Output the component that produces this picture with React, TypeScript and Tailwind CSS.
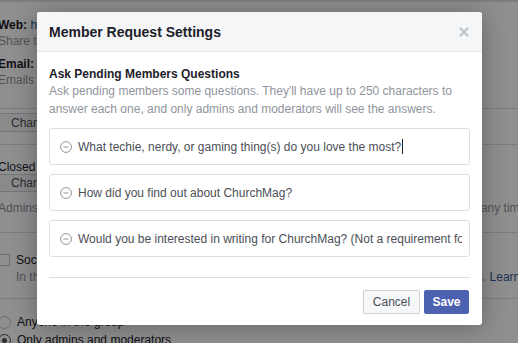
import { useState } from "react";

const questions = [
  "What techie, nerdy, or gaming thing(s) do you love the most?",
  "How did you find out about ChurchMag?",
  "Would you be interested in writing for ChurchMag? (Not a requirement for membership)",
];

export default function App() {
  const [values, setValues] = useState(questions);

  return (
    <div
      className="relative w-[518px] h-[343px] overflow-hidden bg-white text-[12px] leading-4 text-[#1d2129]"
      style={{ fontFamily: '"Liberation Sans", Arial, sans-serif' }}
    >
      <GroupSettingsPage />

      <div className="absolute inset-0 bg-black/[0.44]" />

      <div className="absolute left-[37px] top-[12px] w-[445px] h-[313px] flex flex-col rounded-[3px] bg-white shadow-[0_2px_26px_rgba(0,0,0,0.3)] overflow-hidden">
        <div className="h-[40px] shrink-0 flex items-center justify-between pl-3 pr-[13px] bg-[#f5f6f7] border-b border-[#e5e5e5]">
          <h1 className="text-[14px] font-bold text-[#1d2129]">Member Request Settings</h1>
          <svg width="10" height="10" viewBox="0 0 10 10" className="text-[#bec2c9]">
            <path d="M1 1L9 9M9 1L1 9" stroke="currentColor" strokeWidth="2" />
          </svg>
        </div>

        <div className="flex flex-col flex-1 px-3 pt-[14px] pb-[11px]">
          <h2 className="font-bold text-[#1d2129]">Ask Pending Members Questions</h2>
          <p className="leading-[18px] text-[#90949c]">
            Ask pending members some questions. They'll have up to 250 characters to answer each one,
            and only admins and moderators will see the answers.
          </p>

          <ul className="mt-[10px] flex flex-col gap-[9px]">
            {values.map((q, i) => (
              <li
                key={i}
                className="h-[37px] flex items-center gap-[6px] pl-[10px] pr-[7px] rounded-[3px] border border-[#dddfe2] bg-white"
              >
                <MinusCircle />
                {i === 0 ? (
                  <span className="flex-1 min-w-0 flex items-center text-[#4b4f56] whitespace-nowrap">
                    {q}
                    <span className="ml-px w-px h-[15px] bg-[#1d2129]" />
                  </span>
                ) : (
                  <input
                    value={q}
                    onChange={(e) =>
                      setValues((v) => v.map((x, j) => (j === i ? e.target.value : x)))
                    }
                    className="flex-1 min-w-0 bg-transparent outline-none text-[12px] text-[#4b4f56]"
                    style={{ fontFamily: '"Liberation Sans", Arial, sans-serif' }}
                  />
                )}
              </li>
            ))}
          </ul>

          <div className="mt-[20px] border-t border-[#dadde1]" />

          <div className="mt-auto flex justify-end gap-1 pr-px">
            <button className="h-6 w-[57px] rounded-[2px] border border-[#ced0d4] bg-[#f6f7f9] text-[12px] text-[#4b4f56]">
              Cancel
            </button>
            <button className="h-6 w-[45px] rounded-[2px] border border-[#4c62b1] bg-[#4c62b1] text-[12px] font-bold text-white">
              Save
            </button>
          </div>
        </div>
      </div>
    </div>
  );
}

function MinusCircle() {
  return (
    <svg width="12" height="12" viewBox="0 0 12 12" className="shrink-0 text-[#90949c]">
      <circle cx="6" cy="6" r="5.4" fill="none" stroke="currentColor" strokeWidth="1" />
      <path d="M3.5 6H8.5" stroke="currentColor" strokeWidth="1.2" />
    </svg>
  );
}

function GroupSettingsPage() {
  return (
    <div className="flex flex-col ml-[-2px] w-[640px] border-t-2 border-[#dddfe2] whitespace-nowrap">
      <div className="h-[106px] pt-[15px] flex flex-col">
        <p>
          <span className="font-bold">Web: </span>
          <span className="text-[#365899]">https://www.facebook.com/groups/churchmag</span>
        </p>
        <p className="text-[#90949c]">Share this link to invite people to the group.</p>
        <p className="mt-[7px]">
          <span className="font-bold">Email: </span>
          <span className="text-[#365899]">churchmag@groups.facebook.com</span>
        </p>
        <p className="text-[#90949c]">Emails sent to this address will be posted to the group.</p>
      </div>

      <div className="h-[36px] border-t border-[#dddfe2] pt-[4px]">
        <button className="h-[19px] px-3 border border-[#ced0d4] bg-[#f6f7f9] text-[#4b4f56]">
          Change Group Privacy Setting
        </button>
      </div>

      <div className="h-[88px] border-t border-[#dddfe2] pt-[15px] flex flex-col">
        <p className="leading-[14px]">Closed Group</p>
        <div>
          <button className="h-[18px] px-3 border border-[#ced0d4] bg-[#f6f7f9] text-[#4b4f56]">
            Change Group Privacy
          </button>
        </div>
        <p className="mt-[8px] text-[#90949c]">
          Admins must approve each new group member. Group privacy settings can be changed at any time.
        </p>
      </div>

      <div className="h-[66px] border-t border-[#dddfe2] pt-[19px] flex gap-[6px]">
        <span className="mt-[2px] w-[12px] h-[12px] shrink-0 border border-[#bec2c9] bg-white" />
        <div className="flex flex-col">
          <p>Social Learning Units</p>
          <p className="mt-px text-[#90949c]">
            In this group, members can organize posts in units and track progress through the posts.{" "}
            <span className="text-[#365899]">Learn more</span>
          </p>
        </div>
      </div>

      <div className="border-t border-[#dddfe2] pt-[15px] flex flex-col gap-[2px]">
        <label className="flex items-center gap-[6px]">
          <span className="w-[13px] h-[13px] rounded-full border border-[#bec2c9] bg-white" />
          Anyone in the group
        </label>
        <label className="flex items-center gap-[6px]">
          <span className="w-[13px] h-[13px] rounded-full border border-[#4b4f56] bg-white flex items-center justify-center">
            <span className="w-[5px] h-[5px] rounded-full bg-[#4b4f56]" />
          </span>
          Only admins and moderators
        </label>
      </div>
    </div>
  );
}
